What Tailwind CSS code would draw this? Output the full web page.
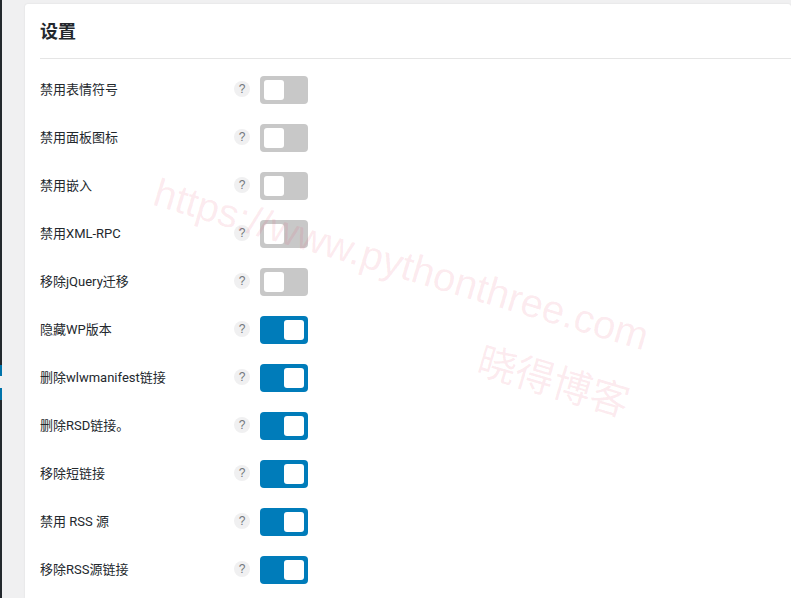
<!DOCTYPE html>
<html lang="zh">
<head>
<meta charset="utf-8">
<script src="https://cdn.jsdelivr.net/npm/@tailwindcss/browser@4"></script>
<title>设置</title>
</head>
<body class="h-[598px] w-[791px] overflow-hidden bg-[#f0f0f1] font-['Roboto','Noto_Sans_CJK_SC',sans-serif] text-[13px] text-[#23282d]">
<div class="relative flex h-full">
  <aside class="relative w-[2px] shrink-0 bg-[#23282d]">
    <div class="absolute top-[365px] left-0 h-[35px] w-[2px] bg-[#f0f0f1]"></div>
    <div class="absolute top-[365px] left-0 h-[11px] w-[2px] bg-[#0073aa]"></div>
    <div class="absolute top-[388px] left-0 h-[12px] w-[2px] bg-[#0073aa]"></div>
  </aside>
  <main class="ml-[23px] mt-[4px] flex-1 rounded-t-[3px] bg-white pl-[15px] shadow-[0_0_2px_rgba(0,0,0,0.1)]">
    <h2 class="flex h-[55px] items-center border-b border-[#e5e5e5] pt-[1px] text-[18px] font-bold text-[#23282d]">设置</h2>
    <div class="flex flex-col pt-[17px]">
      <div class="flex h-[48px] items-start"><span class="flex h-[27px] w-[194px] items-center">禁用表情符号</span><span class="mt-[5px] flex h-[16px] w-[16px] items-center justify-center rounded-full bg-[#f0f0f1] font-['Liberation_Sans'] text-[12px] text-[#72777c]">?</span><span class="ml-[10px] flex h-[28px] w-[48px] items-center justify-start rounded-[4px] bg-[#c8c8c8] p-[4px]"><span class="h-[20px] w-[20px] rounded-[3px] bg-white"></span></span></div>
      <div class="flex h-[48px] items-start"><span class="flex h-[27px] w-[194px] items-center">禁用面板图标</span><span class="mt-[5px] flex h-[16px] w-[16px] items-center justify-center rounded-full bg-[#f0f0f1] font-['Liberation_Sans'] text-[12px] text-[#72777c]">?</span><span class="ml-[10px] flex h-[28px] w-[48px] items-center justify-start rounded-[4px] bg-[#c8c8c8] p-[4px]"><span class="h-[20px] w-[20px] rounded-[3px] bg-white"></span></span></div>
      <div class="flex h-[48px] items-start"><span class="flex h-[27px] w-[194px] items-center">禁用嵌入</span><span class="mt-[5px] flex h-[16px] w-[16px] items-center justify-center rounded-full bg-[#f0f0f1] font-['Liberation_Sans'] text-[12px] text-[#72777c]">?</span><span class="ml-[10px] flex h-[28px] w-[48px] items-center justify-start rounded-[4px] bg-[#c8c8c8] p-[4px]"><span class="h-[20px] w-[20px] rounded-[3px] bg-white"></span></span></div>
      <div class="flex h-[48px] items-start"><span class="flex h-[27px] w-[194px] items-center">禁用XML-RPC</span><span class="mt-[5px] flex h-[16px] w-[16px] items-center justify-center rounded-full bg-[#f0f0f1] font-['Liberation_Sans'] text-[12px] text-[#72777c]">?</span><span class="ml-[10px] flex h-[28px] w-[48px] items-center justify-start rounded-[4px] bg-[#c8c8c8] p-[4px]"><span class="h-[20px] w-[20px] rounded-[3px] bg-white"></span></span></div>
      <div class="flex h-[48px] items-start"><span class="flex h-[27px] w-[194px] items-center">移除jQuery迁移</span><span class="mt-[5px] flex h-[16px] w-[16px] items-center justify-center rounded-full bg-[#f0f0f1] font-['Liberation_Sans'] text-[12px] text-[#72777c]">?</span><span class="ml-[10px] flex h-[28px] w-[48px] items-center justify-start rounded-[4px] bg-[#c8c8c8] p-[4px]"><span class="h-[20px] w-[20px] rounded-[3px] bg-white"></span></span></div>
      <div class="flex h-[48px] items-start"><span class="flex h-[27px] w-[194px] items-center">隐藏WP版本</span><span class="mt-[5px] flex h-[16px] w-[16px] items-center justify-center rounded-full bg-[#f0f0f1] font-['Liberation_Sans'] text-[12px] text-[#72777c]">?</span><span class="ml-[10px] flex h-[28px] w-[48px] items-center justify-end rounded-[4px] bg-[#007cba] p-[4px]"><span class="h-[20px] w-[20px] rounded-[3px] bg-white"></span></span></div>
      <div class="flex h-[48px] items-start"><span class="flex h-[27px] w-[194px] items-center">删除wlwmanifest链接</span><span class="mt-[5px] flex h-[16px] w-[16px] items-center justify-center rounded-full bg-[#f0f0f1] font-['Liberation_Sans'] text-[12px] text-[#72777c]">?</span><span class="ml-[10px] flex h-[28px] w-[48px] items-center justify-end rounded-[4px] bg-[#007cba] p-[4px]"><span class="h-[20px] w-[20px] rounded-[3px] bg-white"></span></span></div>
      <div class="flex h-[48px] items-start"><span class="flex h-[27px] w-[194px] items-center">删除RSD链接。</span><span class="mt-[5px] flex h-[16px] w-[16px] items-center justify-center rounded-full bg-[#f0f0f1] font-['Liberation_Sans'] text-[12px] text-[#72777c]">?</span><span class="ml-[10px] flex h-[28px] w-[48px] items-center justify-end rounded-[4px] bg-[#007cba] p-[4px]"><span class="h-[20px] w-[20px] rounded-[3px] bg-white"></span></span></div>
      <div class="flex h-[48px] items-start"><span class="flex h-[27px] w-[194px] items-center">移除短链接</span><span class="mt-[5px] flex h-[16px] w-[16px] items-center justify-center rounded-full bg-[#f0f0f1] font-['Liberation_Sans'] text-[12px] text-[#72777c]">?</span><span class="ml-[10px] flex h-[28px] w-[48px] items-center justify-end rounded-[4px] bg-[#007cba] p-[4px]"><span class="h-[20px] w-[20px] rounded-[3px] bg-white"></span></span></div>
      <div class="flex h-[48px] items-start"><span class="flex h-[27px] w-[194px] items-center">禁用 RSS 源</span><span class="mt-[5px] flex h-[16px] w-[16px] items-center justify-center rounded-full bg-[#f0f0f1] font-['Liberation_Sans'] text-[12px] text-[#72777c]">?</span><span class="ml-[10px] flex h-[28px] w-[48px] items-center justify-end rounded-[4px] bg-[#007cba] p-[4px]"><span class="h-[20px] w-[20px] rounded-[3px] bg-white"></span></span></div>
      <div class="flex h-[48px] items-start"><span class="flex h-[27px] w-[194px] items-center">移除RSS源链接</span><span class="mt-[5px] flex h-[16px] w-[16px] items-center justify-center rounded-full bg-[#f0f0f1] font-['Liberation_Sans'] text-[12px] text-[#72777c]">?</span><span class="ml-[10px] flex h-[28px] w-[48px] items-center justify-end rounded-[4px] bg-[#007cba] p-[4px]"><span class="h-[20px] w-[20px] rounded-[3px] bg-white"></span></span></div>
    </div>
  </main>
  <div class="pointer-events-none absolute top-[172px] left-[161px] origin-top-left rotate-[16.5deg] text-[40px] leading-none whitespace-nowrap text-[#e8325a]/10 font-['Liberation_Sans',sans-serif]">https://www.pythonthree.com</div>
  <div class="pointer-events-none absolute top-[342px] left-[484px] origin-top-left rotate-[16.5deg] text-[39px] leading-none whitespace-nowrap text-[#e8325a]/10">晓得博客</div>
</div>
</body>
</html>
